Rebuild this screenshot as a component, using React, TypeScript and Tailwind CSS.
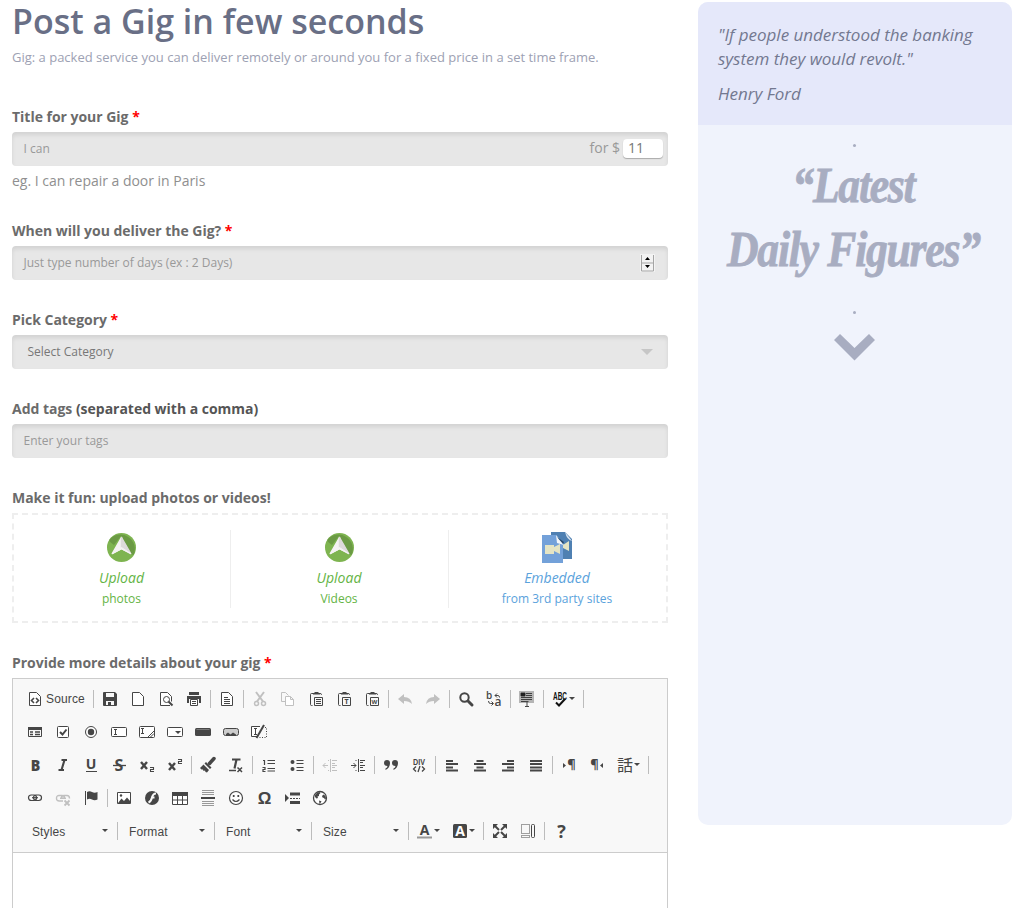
import type { ReactNode } from "react";

const D = "#464646";
const L = "#c0c0c0";

const glyph = (
  s: string,
  x: number,
  y: number,
  size: number,
  extra: Record<string, unknown> = {}
) => (
  <text x={x} y={y} fontSize={size} fill={D} textAnchor="middle" fontFamily="'Open Sans', sans-serif" fontWeight={700} {...extra}>
    {s}
  </text>
);

const page = <path d="M2.5 1.5h7l4 4v9h-11z" fill="#fff" />;
const clip = (
  <>
    <path d="M5 2.5H3.5q-1 0-1 1v10q0 1 1 1H4.500M12 2.500q1.500 0 1.500 1V4" />
    <path d="M5 3.500V2h1.500V1h4v1H12v1.500z" fill={D} stroke="none" />
    <path d="M6.500 6.500h8v8h-8z" />
  </>
);

const icons: Record<string, ReactNode> = {
  source: (
    <>
      {page}
      <path d="M7 7 4.500 9.500 7 12M9 7l2.500 2.500L9 12" strokeWidth="1.600" />
    </>
  ),
  save: (
    <>
      <path d="M1 2q0-1 1-1h11l2 2v11q0 1-1 1H2q-1 0-1-1z" fill={D} stroke="none" />
      <path d="M4 2h8v4H4zM4 10h8v4H4z" fill="#f8f8f8" stroke="none" />
      <path d="M6 11h3v4H6z" fill={D} stroke="none" />
    </>
  ),
  newpage: page,
  preview: (
    <>
      <path d="M12 14.500H2.500v-13h7l4 4v5" fill="#fff" />
      <circle cx="8.500" cy="8.500" r="3" />
      <path d="m10.500 10.500 4 4" strokeWidth="2" />
    </>
  ),
  print: (
    <>
      <path d="M3 1h10v3H3zM1 5h14v7h-2V8H3v4H1z" fill={D} stroke="none" />
      <path d="M4.500 8.500h7v6h-7z" fill="#fff" />
      <path d="M6 10.500h4M6 12.500h4" />
    </>
  ),
  template: (
    <>
      {page}
      <path d="M5 6.500h4M5 8.500h6M5 10.500h6M5 12.500h6" />
    </>
  ),
  cut: (
    <g stroke={L}>
      <path d="m4 1 7 9.500M12 1 5 10.500" strokeWidth="2" />
      <circle cx="4.500" cy="12.500" r="2" strokeWidth="1.500" />
      <circle cx="11.500" cy="12.500" r="2" strokeWidth="1.500" />
    </g>
  ),
  copy: (
    <g stroke={L}>
      <path d="M5 10.500H1.500v-9h4l3 3" />
      <path d="M5.500 5.500h5l3 3v6h-8zM10.500 5.500v3h3" fill="#fff" />
    </g>
  ),
  paste: (
    <>
      {clip}
      <path d="M8 8.500h5M8 10.500h5M8 12.500h5" />
    </>
  ),
  pastetext: (
    <>
      {clip}
      {glyph("T", 10.5, 13.2, 7)}
    </>
  ),
  pasteword: (
    <>
      {clip}
      {glyph("W", 10.5, 13, 6)}
    </>
  ),
  undo: <path d="M1 8l6-5v3q7 0 8 7-3-3-8-3v3z" fill={L} stroke="none" />,
  redo: <path d="M15 8 9 3v3q-7 0-8 7 3-3 8-3v3z" fill={L} stroke="none" />,
  find: (
    <>
      <circle cx="6.500" cy="6.500" r="4.200" strokeWidth="2" />
      <path d="m10 10 4 4" strokeWidth="3" strokeLinecap="round" />
    </>
  ),
  replace: (
    <>
      {glyph("b", 3, 8, 10, { fontWeight: 600 })}
      {glyph("a", 12, 15, 12, { fontWeight: 600 })}
      <path d="M9 4.500h3q1.500 0 1.500 2M11 2.500l-2 2 2 2M2.500 10q0 2.500 2 2.500H7M5.500 10.500l2 2-2 2" />
    </>
  ),
  selectall: (
    <>
      <path d="M0 0h15v12H0z" fill="#b5b5b5" stroke="none" />
      <path d="M2 2h4v3H2zM7 2.500h6M7 4.500h6M2 6.500h11M2 8.500h11M2 10.500h6" fill="#222" stroke="#222" strokeWidth=".8" />
      <path d="M6.500 10.500h3M8 10.500v5M6 15.500h4" />
    </>
  ),
  spell: (
    <>
      <text x="1" y="9" textLength="14" lengthAdjust="spacingAndGlyphs" fontSize="10" fill="#111" fontWeight="700" fontFamily="'Liberation Sans', sans-serif">
        ABC
      </text>
      <path d="m4 11.500 3 3L13 8" strokeWidth="2" stroke="#111" />
    </>
  ),
  form: (
    <>
      <path d="M1.500 3.500h13v9h-13z" />
      <path d="M1 3h14v3H1z" fill={D} stroke="none" />
      <path d="M3 8h3M3 10.500h3M8 8h5M8 10.500h5" strokeWidth="1.500" />
    </>
  ),
  checkbox: (
    <>
      <rect x="2.500" y="2.500" width="11" height="11" rx="1" fill="#fff" />
      <path d="m5 8 2.500 2.500L11.500 5.500" strokeWidth="2" />
    </>
  ),
  radio: (
    <>
      <circle cx="8" cy="8" r="5.500" fill="#fff" />
      <circle cx="8" cy="8" r="3.200" fill={D} stroke="none" />
    </>
  ),
  textfield: (
    <>
      <rect x=".5" y="3.500" width="15" height="9" rx="1" fill="#fff" />
      <path d="M3 5.500h3M4.500 5.500v5M3 10.500h3" />
    </>
  ),
  textarea: (
    <>
      <rect x=".5" y="2.500" width="15" height="11" rx="1" fill="#fff" />
      <path d="M2 4.500h3M3.500 4.500v5M2 9.500h3M9 13l6-6M11.500 13l3.500-3.500" />
    </>
  ),
  select: (
    <>
      <rect x=".5" y="3.500" width="15" height="9" rx="1" fill="#fff" />
      <path d="M8 7h6l-3 3z" fill={D} stroke="none" />
    </>
  ),
  button: (
    <>
      <rect x="0" y="4" width="16" height="8" rx="1.500" fill={D} stroke="none" />
      <path d="M1.500 5.500h13" stroke="#777" />
    </>
  ),
  imagebutton: (
    <>
      <rect x=".5" y="4.500" width="15" height="7" rx="2" fill="#ccc" />
      <path d="M3 11.500V10l2-1.500 2.500 2 2.500-2 3 2v1z" fill={D} stroke="none" />
    </>
  ),
  hidden: (
    <>
      <path d="M9 2.500H.5v10H6" fill="#fff" />
      <path d="M3 4.500h3M4.500 4.500v6M3 10.500h3" />
      <path d="M5.500 14 13 1" strokeWidth="2" />
      <path d="M14 3.500h1.500v10H8" strokeDasharray="1 1.500" />
    </>
  ),
  bold: glyph("B", 8.500, 13.500, 16, { fontWeight: 800, textLength: 9.500, lengthAdjust: "spacingAndGlyphs" }),
  italic: (
    <path d="M6.500 3h5.500M3.500 13H9M9.500 3 6.500 13" strokeWidth="2.100" />
  ),
  underline: (
    <>
      {glyph("U", 8, 12, 14)}
      <path d="M3 14.500h11" />
    </>
  ),
  strike: (
    <>
      {glyph("S", 8, 14, 16)}
      <path d="M2 8.500h13" strokeWidth="1.300" />
    </>
  ),
  sub: (
    <>
      <path d="m2 5 6 7M8 5l-6 7" strokeWidth="2.400" />
      <path d="M11 10.500h3.500v2h-3v2H15" strokeWidth="1.100" />
    </>
  ),
  sup: (
    <>
      <path d="m2 6 6 7M8 6l-6 7" strokeWidth="2.400" />
      <path d="M11 2.500h3.500v2h-3v2H15" strokeWidth="1.100" />
    </>
  ),
  brush: (
    <>
      <path d="m9.500 6.500 4.500-5" strokeWidth="3.500" strokeLinecap="round" />
      <path d="m6 5 5.500 5.500-1.500 1.500-5.500-5.500zM3.500 7.500 9 13l-2 2.500-1.500-.5-.5-1.500-1.500.5-.5-1.500-1.500 0L0 11z" fill={D} stroke="none" />
    </>
  ),
  clear: (
    <>
      <path d="M4 2.500h8.500M8.500 2.500 6.500 11.500" strokeWidth="2.200" />
      <path d="M1 13.500h7M9.500 10.500l4.500 4.500M14 10.500 9.500 15" strokeWidth="1.500" />
    </>
  ),
  numbered: (
    <>
      <path d="M2 3.500h1.500V8M1.500 10.500h2.500v2H2v2h2.500" strokeWidth="1.200" />
      <path d="M6.500 3.500h7.500M6.500 6.500h7.500M6.500 11.500h7.500M6.500 14h7.500" />
    </>
  ),
  bulleted: (
    <>
      <circle cx="3.500" cy="5" r="2" fill={D} stroke="none" />
      <circle cx="3.500" cy="12" r="2" fill={D} stroke="none" />
      <path d="M7.500 3.500h7M7.500 6.500h7M7.500 10.500h7M7.500 13.500h7" />
    </>
  ),
  outdent: (
    <g stroke={L}>
      <path d="M1 8.500h5M3.500 6 1 8.500 3.500 11M8.500 2v13" />
      <path d="M10 3.500h5M10 6.500h3M10 8.500h5M10 10.500h3M10 13.500h5M6 3.500h1M6 13.500h1" />
    </g>
  ),
  indent: (
    <>
      <path d="M1 8.500h5M3.500 6 6 8.500 3.500 11M8.500 2v13" />
      <path d="M10 3.500h5M10 5.500h3M10 8.500h5M10 10.500h3M10 13.500h5M5.500 3.500h1M5.500 13.500h1" />
    </>
  ),
  quote: (
    <path d="M1 6a3 3 0 1 1 6 0q0 5-4.500 7v-1.500q2-1 2-2.500Q1 9 1 6zM9 6a3 3 0 1 1 6 0q0 5-4.500 7v-1.500q2-1 2-2.500Q9 9 9 6z" fill={D} stroke="none" />
  ),
  div: (
    <>
      <text x="2" y="8" textLength="12" lengthAdjust="spacingAndGlyphs" fontSize="9" fill={D} fontWeight="700" fontFamily="'Liberation Sans', sans-serif">
        DIV
      </text>
      <path d="M5 9.500 2.500 12 5 14.500M11 9.500l2.500 2.500-2.500 2.500M9 9l-2 6" strokeWidth="1.300" />
    </>
  ),
  left: <path d="M2 4h7M2 7h12M2 10.500h7M2 13.500h12" strokeWidth="1.800" />,
  center: <path d="M4.500 4h7M2 7h12M4.500 10.500h7M2 13.500h12" strokeWidth="1.800" />,
  right: <path d="M7 4h7M2 7h12M7 10.500h7M2 13.500h12" strokeWidth="1.800" />,
  justify: <path d="M2 4h12M2 7h12M2 10.500h12M2 13.500h12" strokeWidth="1.800" />,
  ltr: (
    <>
      <path d="M2 6l3 2.500L2 11z" fill={D} stroke="none" />
      {glyph("¶", 10.5, 12, 13)}
    </>
  ),
  rtl: (
    <>
      <path d="M14 6l-3 2.500L14 11z" fill={D} stroke="none" />
      {glyph("¶", 5.5, 12, 13)}
    </>
  ),
  lang: glyph("話", 8, 13.5, 16, { fontFamily: "'Noto Sans CJK JP', sans-serif", fontWeight: 400 }),
  link: (
    <g strokeWidth="1.200">
      <rect x="1.500" y="5" width="8" height="5.500" rx="2.700" />
      <rect x="6.500" y="5" width="8" height="5.500" rx="2.700" />
      <path d="M5 7.700h6" />
    </g>
  ),
  unlink: (
    <g stroke={L} strokeWidth="1.400">
      <path d="M8 11H4.200Q1.500 11 1.500 8.200T4.200 5.500H7q2.500 0 2.500 2.500M6.500 8q0-2.500 2.500-2.500h3q2.500 0 2.500 3M5 8.200h6" />
      <path d="m9.500 10.500 5 5M14.500 10.500l-5 5" strokeWidth="1.800" />
    </g>
  ),
  flag: (
    <>
      <path d="M2.500 1v14" />
      <path d="M4 2q2.500-1.500 5 0t5.500 0v7.500q-3 1.500-5.500 0T4 9.500z" fill={D} stroke="none" />
    </>
  ),
  image: (
    <>
      <path d="M1.500 2.500h13v11h-13z" fill="#fff" />
      <path d="m2 13 3.500-4.500L8 11l3-3.500 3.500 4V13z" fill={D} stroke="none" />
      <circle cx="5" cy="5.500" r="1.200" fill={D} stroke="none" />
    </>
  ),
  flash: (
    <>
      <circle cx="8" cy="8" r="7" fill={D} stroke="none" />
      <path d="M12 3.500Q9 3.500 8 7.500T4.500 12.500M7 7.500h3.500" stroke="#f8f8f8" strokeWidth="2" />
    </>
  ),
  table: (
    <>
      <path d="M.5 2.500h15v12H.5z" fill="#fff" />
      <path d="M0 2h16v4H0z" fill={D} stroke="none" />
      <path d="M5.500 6v8M10.500 6v8M1 10h14" />
    </>
  ),
  hr: (
    <>
      <path d="M2 .5h12M2 2.500h12M2 4.500h12M2 11.500h12M2 13.500h12M2 15.500h12" stroke="#999" />
      <path d="M1 8h14" strokeWidth="2" />
    </>
  ),
  smiley: (
    <>
      <circle cx="8" cy="8" r="6.500" fill="#fff" strokeWidth="1.200" />
      <path d="M5.700 5v2M10.300 5v2" strokeWidth="1.700" />
      <path d="M4.500 9.500q3.500 4 7 0" strokeWidth="1.200" />
    </>
  ),
  omega: glyph("Ω", 8.5, 14, 17, { fontFamily: "'Liberation Sans', sans-serif", fontWeight: 700 }),
  pagebreak: (
    <>
      <path d="M1 4l4 4-4 4z" fill={D} stroke="none" />
      <path d="M6 4h10M6 12.500h10" strokeWidth="3" />
      <path d="M6 8.500h10" strokeDasharray="2 1" />
    </>
  ),
  globe: (
    <>
      <circle cx="8" cy="8" r="6.500" fill="#fff" strokeWidth="1.300" />
      <path d="M3 5Q4.500 2.500 7.500 2L8.500 3 7 4.500v1.500L5.500 6.500 6 8 4.500 8.500 3 7zM11.500 4.500l2 1.500.5 2.500-1 1-1-1.500-1.500-.5-.5-1.500zM7 10.500l2.500.8-1 1.700-1 1z" fill={D} stroke="none" />
    </>
  ),
  color: (
    <>
      {glyph("A", 7.5, 11.5, 14)}
      <path d="M0 14.500h15" stroke="#999" strokeWidth="2" />
    </>
  ),
  bgcolor: (
    <>
      <rect x="1" y="1" width="14" height="14" rx="1.500" fill={D} stroke="none" />
      {glyph("A", 8, 13, 14, { fill: "#fff" })}
    </>
  ),
  maximize: (
    <>
      <path d="M1 1h5L1 6zM15 1h-5l5 5zM1 15h5l-5-5zM15 15h-5l5-5z" fill={D} stroke="none" />
      <path d="m3 3 4 4M13 3 9 7M3 13l4-4M13 13 9 9" strokeWidth="2" />
    </>
  ),
  blocks: (
    <>
      <path d="M1.500 1.500h8v9h-8z" strokeDasharray="1 1" />
      <path d="M1.500 12.500h8v2h-8z" strokeDasharray="1 1" />
      <rect x="11.500" y="1.500" width="3" height="13" rx="1" />
    </>
  ),
  help: glyph("?", 8.5, 14.5, 18, { fontWeight: 700 }),
};

const Arrow = () => (
  <svg className="block shrink-0" width="6" height="3" viewBox="0 0 6 3">
    <path d="M0 0h6L3 3z" fill={D} />
  </svg>
);

function Tool({ name, label }: { name: string; label?: string }) {
  const menu = ["spell", "lang", "color", "bgcolor"].includes(name);
  return (
    <button className={menu ? "flex h-6 w-[35px] shrink-0 items-center pl-1.5" : "flex h-6 shrink-0 items-center px-1.5"}>
      <svg className="block shrink-0 overflow-visible" width="16" height="16" viewBox="0 0 16 16" fill="none" stroke={D} strokeWidth="1">
        <g className="[&_text]:stroke-none">{icons[name]}</g>
      </svg>
      {label && <span className="w-[42px] pl-[3px] text-left text-[12px] leading-4 tracking-[0.15px] text-[#464646]">{label}</span>}
      {menu && (
        <span className="ml-px">
          <Arrow />
        </span>
      )}
    </button>
  );
}

const Sep = () => <span className="mx-0.5 h-[18px] w-px shrink-0 bg-[#bcbcbc]" />;

function Tools({ list }: { list: string }) {
  return (
    <div className="flex h-[33px] items-center pl-2">
      {list.split(" ").map((n, i) =>
        n === "|" ? <Sep key={i} /> : <Tool key={i} name={n} label={n === "source" ? "Source" : undefined} />
      )}
    </div>
  );
}

function Combo({ label }: { label: string }) {
  return (
    <>
      <button className="flex h-6 w-[92px] shrink-0 items-center justify-between pr-[7px] pl-[9px] text-[12px] leading-4 tracking-[0.1px] text-[#464646]">
        <span className="pt-0.5">{label}</span>
        <Arrow />
      </button>
      <Sep />
    </>
  );
}

const Label = ({ children, required }: { children: ReactNode; required?: boolean }) => (
  <div className="mb-[5px] h-5 text-sm leading-5 font-bold tracking-[-0.02px] whitespace-nowrap text-[#6b6b6b]">
    {children}
    {required && <span className="text-[#ff0000]"> *</span>}
  </div>
);

const Field = ({ children }: { children: ReactNode }) => (
  <div className="flex h-[34px] items-center justify-between rounded-[4px] bg-[#e7e7e7] pl-[11.5px] text-xs text-[#999999] shadow-[inset_0_3px_4px_rgba(0,0,0,0.09)]">
    {children}
  </div>
);

const UploadIcon = () => (
  <svg className="block" width="29" height="29" viewBox="0 0 29 29">
    <circle cx="14.500" cy="14.500" r="14.500" fill="#7eb450" />
    <path d="M2.500 8.500 7 12l7-9 10 18 2.600 1A14.500 14.500 0 0 0 2.500 6.500z" fill="#6b9a44" />
    <path d="M14.500 4.500 5.300 20.500l9.200-5z" fill="#f5f3f3" stroke="#f5f3f3" strokeWidth="1.500" strokeLinejoin="round" />
    <path d="m14.500 4.500 9.200 16-9.200-5z" fill="#dddada" stroke="#dddada" strokeWidth="1.500" strokeLinejoin="round" />
    <path d="m5.300 20.500 9.200-6 9.200 6-9.200-4.500z" fill="#f5f3f3" stroke="#f5f3f3" strokeWidth="1" strokeLinejoin="round" />
  </svg>
);

const EmbedIcon = () => (
  <svg className="block" width="30" height="31" viewBox="0 0 30 31">
    <path d="M9 0h14l7 7v20H9z" fill="#4f80b2" />
    <path d="M23 0l7 9q-5-1-7-9z" fill="#dbe5ef" />
    <path d="M0 3h14l7 8v20H0z" fill="#73a1d9" />
    <path d="M14 3l8 10-7-2z" fill="#f3f6fa" />
    <path d="M15 5l6 7 1-2z" fill="#27486c" />
    <path d="M3 13h9v2l6-3v10l-6-3v3H3z" fill="#e4e4c4" />
    <path d="m21 13 6-4v10l-6-3z" fill="#e4e4c4" />
  </svg>
);

function Upload({ icon, title, text, tone }: { icon: ReactNode; title: string; text: string; tone: string }) {
  return (
    <div className={`flex h-[78px] w-[216px] flex-col items-center ${tone}`}>
      <div className="flex h-[35px] items-center">{icon}</div>
      <div className="mt-px h-[22px] text-sm leading-6 italic">{title}</div>
      <div className="h-5 text-xs leading-[22px]">{text}</div>
    </div>
  );
}

export default function App() {
  return (
    <div className="flex h-[908px] w-[1026px] gap-[30px] overflow-hidden bg-white pl-3 font-['Open_Sans',sans-serif]">
      <main className="w-[656px] shrink-0">
        <h1 className="h-[47px] text-[34px] leading-[42px] font-semibold whitespace-nowrap text-[#696f86]">Post a Gig in few seconds</h1>
        <p className="mb-10 h-5 text-[13px] leading-5 whitespace-nowrap text-[#9da1b3]">
          Gig: a packed service you can deliver remotely or around you for a fixed price in a set time frame.
        </p>

        <Label required>Title for your Gig</Label>
        <Field>
          <span>I can</span>
          <span className="flex items-center gap-[3px] pr-[5px] pb-0.5 text-sm">
            for $
            <span className="flex h-[19px] w-10 items-center rounded-[4px] bg-white pl-[5px] text-[#777777] shadow-[0_1px_1px_#aaa]">11</span>
          </span>
        </Field>
        <p className="mt-[5px] mb-[30px] h-5 text-sm leading-5 tracking-[-0.02px] text-[#8f8f8f]">eg. I can repair a door in Paris</p>

        <Label required>When will you deliver the Gig?</Label>
        <div className="mb-[30px]">
          <Field>
            <span>Just type number of days (ex : 2 Days)</span>
            <svg className="mr-[13px]" width="15" height="18" viewBox="0 0 15 18">
              <path d="M0 0h15v18H0z" fill="#f3f3f3" />
              <path d="M1.500 1v16h12V1M1 9h13" fill="none" stroke="#a5a5a5" />
              <path d="M5 6h5L7.500 3zM5 11h5l-2.500 3z" fill="#000" />
            </svg>
          </Field>
        </div>

        <Label required>Pick Category</Label>
        <div className="mb-[30px]">
          <Field>
            <span className="pl-1 text-[#777777]">Select Category</span>
            <svg className="mr-[15px]" width="12" height="6" viewBox="0 0 12 6">
              <path d="M0 0h12L6 6z" fill="#c6c6c6" />
            </svg>
          </Field>
        </div>

        <Label>
          Add tags <span className="text-[#555555]">(separated with a comma)</span>
        </Label>
        <div className="mb-[30px]">
          <Field>
            <span>Enter your tags</span>
          </Field>
        </div>

        <Label>Make it fun: upload photos or videos!</Label>
        <section className="mb-[30px] flex h-[110px] border-2 border-dashed border-[#eeeeee] pt-[15px]">
          <Upload icon={<UploadIcon />} title="Upload" text="photos" tone="pr-px text-[#64b445]" />
          <span className="h-[78px] w-px bg-[#eeeeee]" />
          <Upload icon={<UploadIcon />} title="Upload" text="Videos" tone="text-[#64b445]" />
          <span className="w-px" />
          <span className="h-[78px] w-px bg-[#eeeeee]" />
          <Upload icon={<EmbedIcon />} title="Embedded" text="from 3rd party sites" tone="text-[#5aa2dc]" />
        </section>

        <Label required>Provide more details about your gig</Label>
        <section className="h-[240px] border border-[#cccccc] bg-white font-['Liberation_Sans',sans-serif]">
          <div className="h-[174px] border-b border-[#cccccc] bg-[#f8f8f8] pt-[3px]">
            <Tools list="source | save newpage preview print | template | cut copy paste pastetext pasteword | undo redo | find replace | selectall | spell |" />
            <Tools list="form checkbox radio textfield textarea select button imagebutton hidden" />
            <Tools list="bold italic underline strike sub sup | brush clear | numbered bulleted | outdent indent | quote div | left center right justify | ltr rtl lang |" />
            <Tools list="link unlink flag | image flash table hr smiley omega pagebreak globe" />
            <div className="flex h-[33px] items-center pl-[10px]">
              {["Styles", "Format", "Font", "Size"].map((l) => (
                <Combo key={l} label={l} />
              ))}
              <Tool name="color" />
              <Tool name="bgcolor" />
              <Sep />
              <Tool name="maximize" />
              <Tool name="blocks" />
              <Sep />
              <Tool name="help" />
            </div>
          </div>
        </section>
      </main>

      <aside className="mt-0.5 h-[823px] w-[314px] overflow-hidden rounded-[10px] bg-[#f0f3fc]">
        <blockquote className="h-[123px] bg-[#e5e8fa] pt-[21px] pl-5 text-[17px] leading-6 tracking-[-0.02px] whitespace-nowrap text-[#737890] italic">
          <p>"If people understood the banking</p>
          <p>system they would revolt."</p>
          <p className="mt-[11px]">Henry Ford</p>
        </blockquote>
        <div className="flex flex-col items-center pr-0.5 text-[#a8adc1]">
          <span className="mt-[19px] h-[3px] w-[3px] rounded-full bg-[#a8adc1]" />
          <div className="mt-1.5 mr-0.5 scale-x-[0.875] text-center font-['Liberation_Serif',serif] text-[50px] leading-[64px] font-bold tracking-[-1.5px] whitespace-nowrap italic [-webkit-text-stroke:0.8px_#a8adc1]">
            <p>“Latest</p>
            <p>Daily Figures”</p>
          </div>
          <span className="mt-[30px] h-[3px] w-[3px] rounded-full bg-[#a8adc1]" />
          <svg className="mt-[20px]" width="41" height="27" viewBox="0 0 41 27">
            <path d="M6 0 20.500 14 35 0l6 6-20.500 20.500L0 6z" fill="#a8adc1" />
          </svg>
        </div>
      </aside>
    </div>
  );
}
